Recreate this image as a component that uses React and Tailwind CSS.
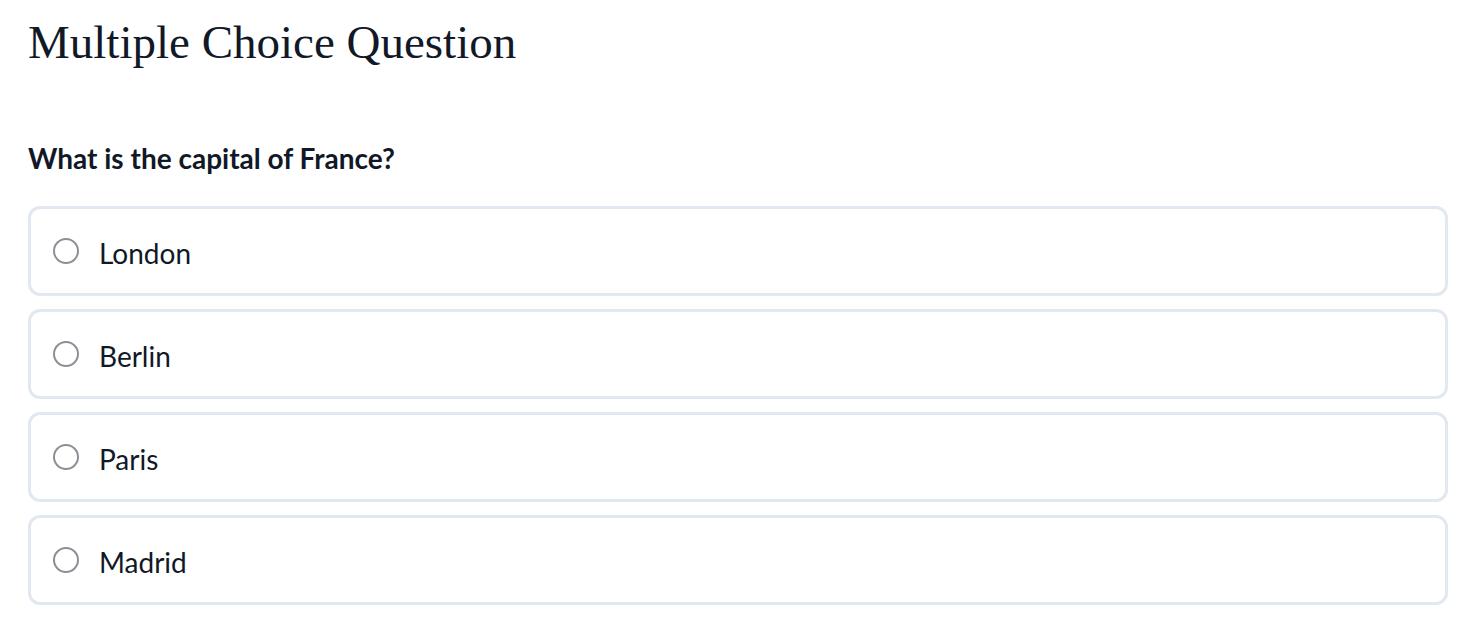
const options = ["London", "Berlin", "Paris", "Madrid"];

export default function App() {
  return (
    <div className="bg-white min-h-screen pl-7 pr-5 pt-4 text-[#111827]">
      <h1 className="font-['Liberation_Serif',serif] text-[47px] leading-[52px] font-normal">
        Multiple Choice Question
      </h1>

      <h2 className="mt-[72px] font-['Lato',sans-serif] font-bold text-[28px] leading-9">
        What is the capital of France?
      </h2>

      <div className="mt-[30px] flex flex-col gap-[13px]">
        {options.map((opt) => (
          <label
            key={opt}
            className="flex items-center gap-5 h-[90px] px-[22px] border-[3px] border-[#e2e8f0] rounded-xl cursor-pointer"
          >
            <span className="w-[26px] h-[26px] rounded-full border-2 border-[#8e8e96] bg-white shrink-0" />
            <span className="font-['Lato',sans-serif] text-[28px] leading-8 pt-[3px]">{opt}</span>
          </label>
        ))}
      </div>
    </div>
  );
}
